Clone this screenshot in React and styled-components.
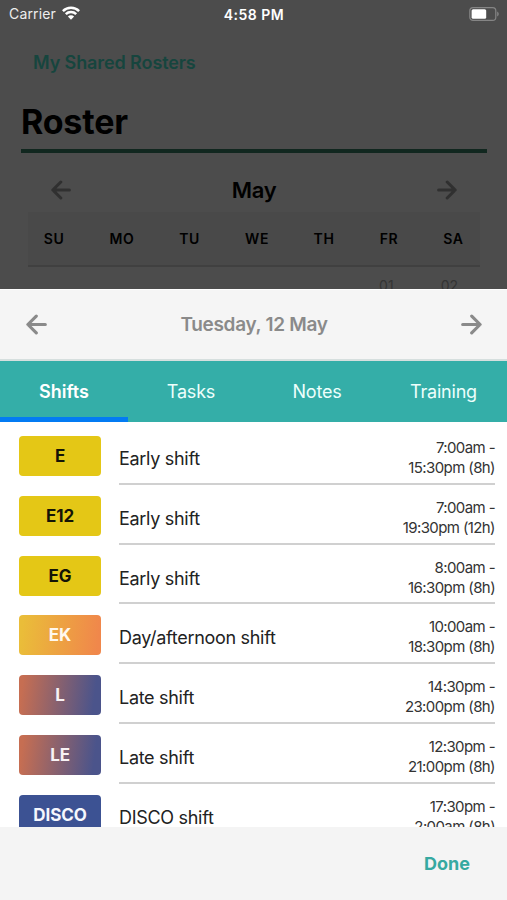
import React, { useState } from 'react';
import styled, { createGlobalStyle } from 'styled-components';

const SHIFTS = [
  { code: 'E', name: 'Early shift', from: '7:00am -', to: '15:30pm (8h)', kind: 'early' },
  { code: 'E12', name: 'Early shift', from: '7:00am -', to: '19:30pm (12h)', kind: 'early' },
  { code: 'EG', name: 'Early shift', from: '8:00am -', to: '16:30pm (8h)', kind: 'early' },
  { code: 'EK', name: 'Day/afternoon shift', from: '10:00am -', to: '18:30pm (8h)', kind: 'day' },
  { code: 'L', name: 'Late shift', from: '14:30pm -', to: '23:00pm (8h)', kind: 'late' },
  { code: 'LE', name: 'Late shift', from: '12:30pm -', to: '21:00pm (8h)', kind: 'late' },
  { code: 'DISCO', name: 'DISCO shift', from: '17:30pm -', to: '2:00am (8h)', kind: 'disco' }
];

const BADGES = {
  early: { background: '#e4c716', color: '#151406' },
  day: { background: 'linear-gradient(97deg, #eabd39 5%, #f0874b 95%)', color: '#fff8ee' },
  late: { background: 'linear-gradient(97deg, #c66e52 5%, #4b548b 90%)', color: '#f8f2f5' },
  disco: { background: '#3c5293', color: '#f5f7fd' }
};

const DAYS = ['SU', 'MO', 'TU', 'WE', 'TH', 'FR', 'SA'];
const TABS = ['Shifts', 'Tasks', 'Notes', 'Training'];

const Arrow = ({ size, flip }) => (
  <ArrowIcon width={size} height={size} viewBox="0 0 20 20" $flip={flip}>
    <path d="M18.4 10H2M9.8 2 1.8 10l8 8" />
  </ArrowIcon>
);

const App = () => {
  const [tab, setTab] = useState('Shifts');

  return (
    <Screen>
      <GlobalStyle />
      <Backdrop>
        <StatusBar>
          <Carrier>
            <span>Carrier</span>
            <svg width="18" height="14" viewBox="0 0 18 14">
              <g fill="none" stroke="#fff" strokeWidth="2.5">
                <path d="M.9 5.1a11.5 11.5 0 0 1 16.2 0" />
                <path d="M3.8 8.2a7.4 7.4 0 0 1 10.4 0" />
              </g>
              <path d="M9 13.7 5.9 10.5a4.4 4.4 0 0 1 6.2 0z" fill="#fff" />
            </svg>
          </Carrier>
          <Clock>4:58 PM</Clock>
          <Battery width="30" height="14" viewBox="0 0 30 14">
            <rect x=".8" y=".6" width="26" height="12.8" rx="3.2" fill="none" stroke="#858585" strokeWidth="1.2" />
            <rect x="2.6" y="2.3" width="14.6" height="9.4" rx="1.5" fill="#fff" />
            <path d="M28.2 4.6c2 .8 2 4 0 4.8z" fill="#858585" />
          </Battery>
        </StatusBar>
        <SharedLink>My Shared Rosters</SharedLink>
        <Title>Roster</Title>
        <MonthBar>
          <Arrow size={20} />
          <Month>May</Month>
          <Arrow size={20} flip />
        </MonthBar>
        <WeekHeader>
          {DAYS.map((d) => (
            <span key={d}>{d}</span>
          ))}
        </WeekHeader>
        <Dates>
          <span>01</span>
          <span>02</span>
        </Dates>
      </Backdrop>

      <DayBar>
        <Arrow size={21} />
        <DayName>Tuesday, 12 May</DayName>
        <Arrow size={21} flip />
      </DayBar>
      <Tabs>
        {TABS.map((t) => (
          <Tab key={t} $active={t === tab} onClick={() => setTab(t)}>
            {t}
          </Tab>
        ))}
      </Tabs>
      <List>
        {SHIFTS.map((s) => (
          <Row key={s.code}>
            <Badge $kind={s.kind}>{s.code}</Badge>
            <Details>
              <Name>{s.name}</Name>
              <Time>
                <span>{s.from}</span>
                <span>{s.to}</span>
              </Time>
            </Details>
          </Row>
        ))}
      </List>
      <Footer>
        <Done>Done</Done>
      </Footer>
    </Screen>
  );
};

const GlobalStyle = createGlobalStyle`
  * {
    box-sizing: border-box;
  }
  body {
    margin: 0;
  }
`;

const Screen = styled.div`
  width: 507px;
  height: 900px;
  display: flex;
  flex-direction: column;
  overflow: hidden;
  background: #fff;
  font-family: Inter, 'Liberation Sans', sans-serif;
`;

const Backdrop = styled.div`
  height: 289px;
  flex: none;
  overflow: hidden;
  background: #4c4c4c;
`;

const StatusBar = styled.div`
  height: 28px;
  padding: 0 8px 0 9px;
  display: grid;
  grid-template-columns: 1fr auto 1fr;
  align-items: center;
  color: #fff;
  font-size: 14px;
`;

const Carrier = styled.div`
  display: flex;
  align-items: center;
  gap: 6px;
  color: #eee;
  line-height: 28px;
  letter-spacing: 0.15px;
  svg {
    margin-bottom: 2px;
  }
`;

const Clock = styled.div`
  font-weight: 600;
  letter-spacing: 0.5px;
`;

const Battery = styled.svg`
  justify-self: end;
  margin-bottom: 1px;
`;

const SharedLink = styled.div`
  margin: 23px 0 0 33px;
  line-height: 24px;
  color: #16453e;
  font-size: 18px;
  font-weight: 600;
  letter-spacing: -0.1px;
`;

const Title = styled.div`
  margin: 22px 20px 0 21px;
  height: 56px;
  border-bottom: 4px solid #11271f;
  color: #000;
  font-size: 34px;
  line-height: 50px;
  font-weight: 700;
  letter-spacing: -0.2px;
`;

const MonthBar = styled.div`
  height: 59px;
  padding: 15px 50px 0 51px;
  display: flex;
  align-items: flex-start;
  justify-content: space-between;
  color: #303030;
  > svg {
    margin-top: 12px;
  }
`;

const Month = styled.div`
  color: #000;
  font-size: 22px;
  line-height: 44px;
  font-weight: 600;
  letter-spacing: -0.3px;
`;

const WeekHeader = styled.div`
  height: 55px;
  margin: 0 27px 0 28px;
  display: grid;
  grid-template-columns: 52px 84px 51px 84px 50px 80px 49px;
  justify-items: center;
  align-items: center;
  background: #494949;
  border-bottom: 2px solid #404040;
  color: #000;
  font-size: 14px;
  font-weight: 600;
  letter-spacing: 0.6px;
`;

const Dates = styled.div`
  padding: 10px 49px 0 0;
  display: flex;
  justify-content: flex-end;
  gap: 47px;
  color: #343434;
  font-size: 14px;
  line-height: 17px;
`;

const ArrowIcon = styled.svg`
  flex: none;
  fill: none;
  stroke: currentColor;
  stroke-width: 3;
  stroke-linecap: round;
  stroke-linejoin: round;
  transform: ${(p) => (p.$flip ? 'scaleX(-1)' : 'none')};
`;

const DayBar = styled.div`
  height: 72px;
  flex: none;
  padding: 0 25px 0 26px;
  display: flex;
  align-items: center;
  justify-content: space-between;
  background: #f5f5f5;
  border-top: 1px solid #fff;
  border-bottom: 2px solid #d6dfde;
  color: #8a8a8a;
`;

const DayName = styled.div`
  font-size: 19px;
  font-weight: 600;
  letter-spacing: -0.3px;
`;

const Tabs = styled.div`
  height: 61px;
  flex: none;
  display: grid;
  grid-template-columns: 128px 126px 126px 127px;
  background: #34aea8;
`;

const Tab = styled.button`
  padding: 5px 0 0;
  border: 0;
  border-bottom: 5px solid ${(p) => (p.$active ? '#037bf3' : 'transparent')};
  background: none;
  color: ${(p) => (p.$active ? '#fff' : '#edfffc')};
  font: inherit;
  font-size: 18px;
  font-weight: ${(p) => (p.$active ? 600 : 400)};
  letter-spacing: ${(p) => (p.$active ? '0' : '-0.2px')};
`;

const List = styled.div`
  flex: 1;
  min-height: 0;
  padding: 3px 12px 0 19px;
  overflow: hidden;
`;

const Row = styled.div`
  height: 59.8px;
  display: flex;
  gap: 18px;
`;

const Badge = styled.div`
  width: 82px;
  height: 40px;
  flex: none;
  margin-top: 11px;
  border-radius: 4px;
  text-align: center;
  font-size: 17px;
  line-height: 40px;
  font-weight: 700;
  letter-spacing: -0.1px;
  background: ${(p) => BADGES[p.$kind].background};
  color: ${(p) => BADGES[p.$kind].color};
`;

const Details = styled.div`
  flex: 1;
  display: flex;
  justify-content: space-between;
  border-bottom: 2px solid #d0d0d0;
`;

const Name = styled.div`
  padding-top: 22px;
  color: #222;
  font-size: 18px;
  line-height: 24px;
  letter-spacing: -0.3px;
`;

const Time = styled.div`
  padding-top: 13px;
  display: flex;
  flex-direction: column;
  align-items: flex-end;
  color: #333;
  font-size: 15px;
  line-height: 20px;
  letter-spacing: -0.6px;
`;

const Footer = styled.div`
  height: 73px;
  flex: none;
  padding-right: 37px;
  display: flex;
  align-items: center;
  justify-content: flex-end;
  background: #f4f4f4;
`;

const Done = styled.button`
  padding: 0;
  border: 0;
  background: none;
  color: #36a9a1;
  font: inherit;
  font-size: 18px;
  font-weight: 700;
`;

export default App;
